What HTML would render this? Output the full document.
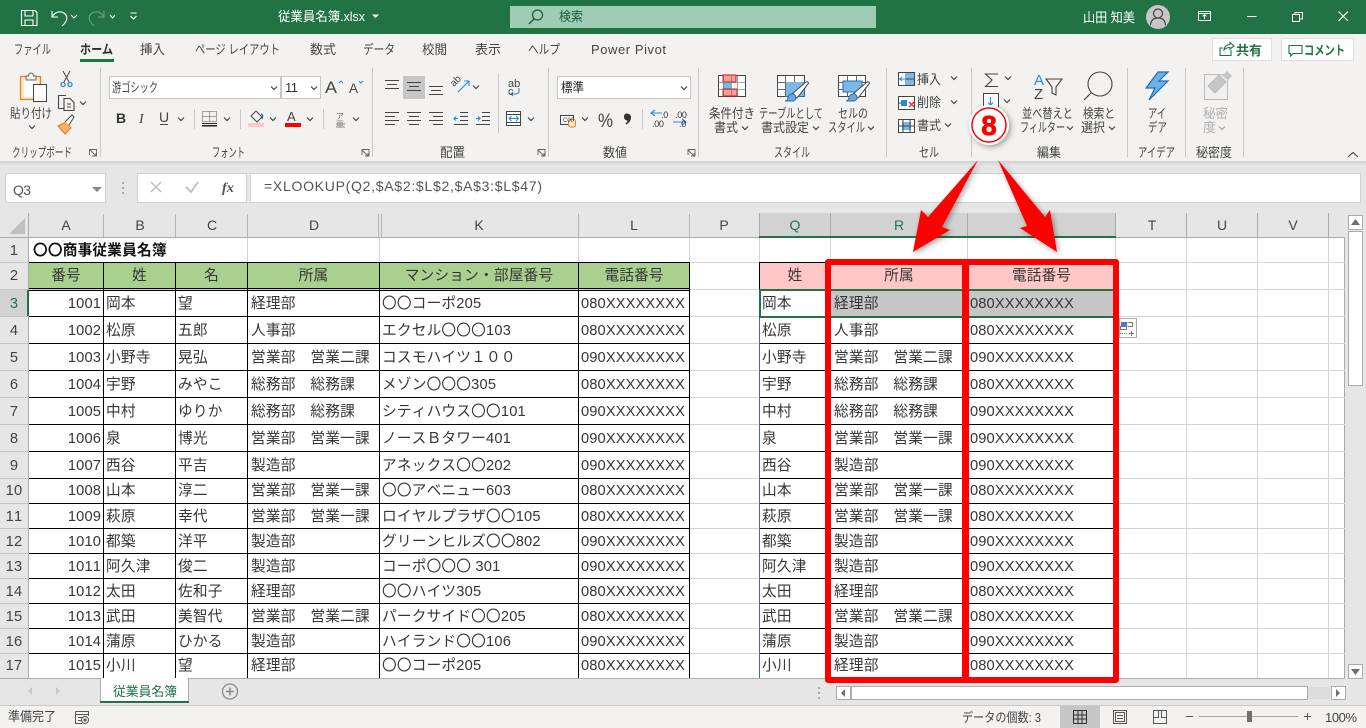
<!DOCTYPE html>
<html lang="ja"><head><meta charset="utf-8"><title>従業員名簿.xlsx</title>
<style>
html,body{margin:0;padding:0;width:1366px;height:728px;overflow:hidden;background:#fff}
body{position:relative;font-family:"Liberation Sans","Noto Sans CJK JP",sans-serif;color:#222}
svg{position:absolute;left:0;top:0}
svg text{font-family:"Liberation Sans","Noto Sans CJK JP",sans-serif}
.r{position:absolute;left:0;width:1366px;font-size:14.67px;white-space:nowrap;color:#363636;font-kerning:none}
.r span{position:absolute;top:0;line-height:inherit;letter-spacing:.2px}
.A{left:29px;width:72px;text-align:right}
.B{left:106px}.C{left:178px}.D{left:251px}.K{left:382px}.L{left:581px}
.Q{left:762px}.R{left:834px}.S{left:970px}
.r .L,.r .S,.r .A{letter-spacing:.12px}
.n{left:0;width:28px;text-align:center;color:#444}
.h span{text-align:center}
.h .A{left:29px;width:74px}.h .B{left:104px;width:71px}.h .C{left:176px;width:71px}.h .D{left:248px;width:131px}.h .K{left:380px;width:198px}.h .L{left:579px;width:110px}
.h .Q{left:760px;width:70px}.h .R{left:831px;width:136px}.h .S{left:968px;width:147px}
.h .n{left:0;width:28px}
</style></head><body>

<svg width="1366" height="728" viewBox="0 0 1366 728">
<defs><path id="c" d="M-3 -1.5L0 1.5L3 -1.5" fill="none" stroke="#444" stroke-width="1.2"/></defs>
<g shape-rendering="crispEdges">
<rect width="1366" height="34" fill="#217346"/>
<rect y="34" width="1366" height="127" fill="#f3f2f1"/>
<rect y="161" width="1366" height="52" fill="#e6e6e6"/>
<rect y="161" width="1366" height="2" fill="#d4d4d4"/>
<rect y="163" width="1366" height="2" fill="#dfdfdf"/>
<rect y="213" width="1345" height="25" fill="#e6e6e6"/>
<rect x="0" y="238" width="28" height="440" fill="#e6e6e6"/>
<rect x="1345" y="213" width="21" height="465" fill="#e6e6e6"/>
<rect y="678" width="1366" height="28" fill="#e6e6e6"/>
<rect y="706" width="1366" height="22" fill="#f3f2f1"/>
<rect y="705" width="1366" height="1" fill="#c8c8c8"/>
<rect x="0" y="678" width="1345" height="1" fill="#ababab"/>
<rect x="1344" y="238" width="1" height="441" fill="#ababab"/>
<rect x="0" y="237" width="1345" height="1" fill="#ababab"/>
<rect x="28" y="213" width="1" height="465" fill="#ababab"/>
<!-- ribbon separators -->
<rect x="100" y="68" width="1" height="89" fill="#c8c8c8"/><rect x="372" y="68" width="1" height="89" fill="#c8c8c8"/><rect x="548" y="68" width="1" height="89" fill="#c8c8c8"/><rect x="698" y="68" width="1" height="89" fill="#c8c8c8"/><rect x="886" y="68" width="1" height="89" fill="#c8c8c8"/><rect x="971" y="68" width="1" height="89" fill="#c8c8c8"/><rect x="1127" y="68" width="1" height="89" fill="#c8c8c8"/><rect x="1185" y="68" width="1" height="89" fill="#c8c8c8"/><rect x="1243" y="68" width="1" height="89" fill="#c8c8c8"/>
<rect x="194" y="109" width="1" height="20" fill="#c8c8c8"/><rect x="240" y="109" width="1" height="20" fill="#c8c8c8"/><rect x="323" y="109" width="1" height="20" fill="#c8c8c8"/><rect x="498" y="74" width="1" height="59" fill="#c8c8c8"/><rect x="642" y="109" width="1" height="20" fill="#c8c8c8"/>
<!-- title -->
<rect x="510" y="6" width="366" height="22" fill="#9fcdb3"/>
<rect x="80" y="59" width="34" height="3" fill="#217346"/>
<!-- buttons -->
<rect x="1212.5" y="38.5" width="59" height="22" fill="#fff" stroke="#e1dfdd"/>
<rect x="1281.5" y="38.5" width="72" height="22" fill="#fff" stroke="#e1dfdd"/>
<!-- combos -->
<rect x="109.5" y="76.5" width="171" height="22" fill="#fff" stroke="#c6c6c6"/>
<rect x="281.5" y="76.5" width="39" height="22" fill="#fff" stroke="#c6c6c6"/>
<rect x="557.5" y="76.5" width="133" height="22" fill="#fff" stroke="#c6c6c6"/>
<rect x="403" y="76" width="22" height="23" fill="#c6c6c6"/>
<!-- formula bar -->
<rect x="5.5" y="173.5" width="100" height="29" fill="#fff" stroke="#d0d0d0"/>
<rect x="137.5" y="173.5" width="109" height="29" fill="#fff" stroke="#d0d0d0"/>
<rect x="250.5" y="173.5" width="1110" height="29" fill="#fff" stroke="#d0d0d0"/>
<rect x="122" y="182" width="2" height="2" fill="#a6a6a6"/><rect x="122" y="187" width="2" height="2" fill="#a6a6a6"/><rect x="122" y="192" width="2" height="2" fill="#a6a6a6"/>

<!-- column header separators -->
<rect x="103" y="214" width="1" height="23" fill="#b4b4b4"/><rect x="175" y="214" width="1" height="23" fill="#b4b4b4"/><rect x="247" y="214" width="1" height="23" fill="#b4b4b4"/><rect x="378" y="214" width="1" height="23" fill="#b4b4b4"/><rect x="381" y="214" width="1" height="23" fill="#b4b4b4"/><rect x="578" y="214" width="1" height="23" fill="#b4b4b4"/><rect x="689" y="214" width="1" height="23" fill="#b4b4b4"/>
<rect x="759" y="213" width="357" height="24" fill="#d2d2d2"/>
<rect x="759" y="213" width="1" height="24" fill="#ababab"/><rect x="830" y="213" width="1" height="24" fill="#ababab"/><rect x="967" y="213" width="1" height="24" fill="#ababab"/><rect x="1115" y="213" width="1" height="24" fill="#ababab"/><rect x="1186" y="213" width="1" height="24" fill="#ababab"/><rect x="1257" y="213" width="1" height="24" fill="#ababab"/><rect x="1328" y="213" width="1" height="24" fill="#ababab"/>
<rect x="759" y="236" width="357" height="2" fill="#217346"/>
<polygon points="9,234 25,218 25,234" fill="#bfbfbf"/>

<!-- light grid -->
<g fill="#d4d4d4">
<rect x="29" y="262" width="1316" height="1"/><rect x="29" y="289" width="1316" height="1"/><rect x="29" y="316" width="1316" height="1"/><rect x="29" y="343" width="1316" height="1"/><rect x="29" y="370" width="1316" height="1"/><rect x="29" y="397" width="1316" height="1"/><rect x="29" y="424" width="1316" height="1"/><rect x="29" y="451" width="1316" height="1"/><rect x="29" y="478" width="1316" height="1"/><rect x="29" y="503" width="1316" height="1"/><rect x="29" y="528" width="1316" height="1"/><rect x="29" y="553" width="1316" height="1"/><rect x="29" y="578" width="1316" height="1"/><rect x="29" y="603" width="1316" height="1"/><rect x="29" y="628" width="1316" height="1"/><rect x="29" y="653" width="1316" height="1"/>
<rect x="247" y="238" width="1" height="440"/><rect x="379" y="238" width="1" height="440"/><rect x="578" y="238" width="1" height="440"/><rect x="689" y="238" width="1" height="440"/><rect x="759" y="238" width="1" height="440"/><rect x="830" y="238" width="1" height="440"/><rect x="967" y="238" width="1" height="440"/><rect x="1115" y="238" width="1" height="440"/><rect x="1186" y="238" width="1" height="440"/><rect x="1257" y="238" width="1" height="440"/><rect x="1328" y="238" width="1" height="440"/>
</g>

<!-- row header lines -->
<g fill="#c4c4c4"><rect y="262" width="28" height="1"/><rect y="289" width="28" height="1"/><rect y="316" width="28" height="1"/><rect y="343" width="28" height="1"/><rect y="370" width="28" height="1"/><rect y="397" width="28" height="1"/><rect y="424" width="28" height="1"/><rect y="451" width="28" height="1"/><rect y="478" width="28" height="1"/><rect y="503" width="28" height="1"/><rect y="528" width="28" height="1"/><rect y="553" width="28" height="1"/><rect y="578" width="28" height="1"/><rect y="603" width="28" height="1"/><rect y="628" width="28" height="1"/><rect y="653" width="28" height="1"/></g>
<rect y="290" width="28" height="26" fill="#d2d2d2"/>

<!-- header fills -->
<rect x="29" y="263" width="660" height="25" fill="#a9d08e"/>
<rect x="760" y="263" width="355" height="26" fill="#ffc7c7"/>
<rect x="831" y="290" width="284" height="26" fill="#c6c6c6"/>

<!-- black table lines left -->
<g fill="#000">
<rect x="29" y="262" width="661" height="1"/><rect x="29" y="288" width="661" height="1"/><rect x="29" y="290" width="661" height="1"/><rect x="29" y="316" width="661" height="1"/><rect x="29" y="343" width="661" height="1"/><rect x="29" y="370" width="661" height="1"/><rect x="29" y="397" width="661" height="1"/><rect x="29" y="424" width="661" height="1"/><rect x="29" y="451" width="661" height="1"/><rect x="29" y="478" width="661" height="1"/><rect x="29" y="503" width="661" height="1"/><rect x="29" y="528" width="661" height="1"/><rect x="29" y="553" width="661" height="1"/><rect x="29" y="578" width="661" height="1"/><rect x="29" y="603" width="661" height="1"/><rect x="29" y="628" width="661" height="1"/><rect x="29" y="653" width="661" height="1"/>
<rect x="103" y="262" width="1" height="416"/><rect x="175" y="262" width="1" height="416"/><rect x="247" y="262" width="1" height="416"/><rect x="379" y="262" width="1" height="416"/><rect x="578" y="262" width="1" height="416"/><rect x="689" y="262" width="1" height="416"/>
<!-- right -->
<rect x="759" y="262" width="357" height="1"/><rect x="760" y="316" width="356" height="1"/><rect x="760" y="343" width="356" height="1"/><rect x="760" y="370" width="356" height="1"/><rect x="760" y="397" width="356" height="1"/><rect x="760" y="424" width="356" height="1"/><rect x="760" y="451" width="356" height="1"/><rect x="760" y="478" width="356" height="1"/><rect x="760" y="503" width="356" height="1"/><rect x="760" y="528" width="356" height="1"/><rect x="760" y="553" width="356" height="1"/><rect x="760" y="578" width="356" height="1"/><rect x="760" y="603" width="356" height="1"/><rect x="760" y="628" width="356" height="1"/><rect x="760" y="653" width="356" height="1"/>
<rect x="759" y="262" width="1" height="28"/><rect x="830" y="262" width="1" height="416"/><rect x="967" y="262" width="1" height="416"/><rect x="1115" y="262" width="1" height="416"/>
</g>
<rect x="759" y="317" width="1" height="361" fill="#3f6fb5"/>
<!-- selection -->
<rect x="27" y="290" width="2" height="26" fill="#217346"/>
<rect x="759" y="289" width="357" height="2" fill="#217346"/>
<rect x="759" y="316" width="357" height="2" fill="#217346"/>
<rect x="759" y="289" width="2" height="29" fill="#217346"/>
<!-- scrollbars -->
<rect x="1348.5" y="215.5" width="14" height="14" fill="#fff" stroke="#ababab"/>
<rect x="1348.5" y="231.5" width="14" height="154" fill="#fff" stroke="#ababab"/>
<rect x="1348.5" y="664.5" width="14" height="14" fill="#fff" stroke="#ababab"/>
<rect x="836.5" y="686.5" width="14" height="13" fill="#fff" stroke="#ababab"/>
<rect x="851.5" y="686.5" width="456" height="13" fill="#fff" stroke="#ababab"/>
<rect x="1308" y="687" width="22" height="12" fill="#dcdcdc"/>
<rect x="1331.5" y="686.5" width="14" height="13" fill="#fff" stroke="#ababab"/>
<rect x="818" y="687" width="2" height="2" fill="#a6a6a6"/><rect x="818" y="692" width="2" height="2" fill="#a6a6a6"/><rect x="818" y="697" width="2" height="2" fill="#a6a6a6"/>
<!-- sheet tab -->
<rect x="100" y="678" width="88" height="24" fill="#fff"/>
<rect x="100" y="678" width="1" height="24" fill="#ababab"/><rect x="188" y="678" width="1" height="24" fill="#ababab"/>
<rect x="100" y="701" width="89" height="2" fill="#217346"/>
<!-- status -->
<rect x="1060" y="706" width="40" height="22" fill="#c6c6c6"/>
<rect x="1199" y="716" width="99" height="1" fill="#a6a6a6"/><rect x="1247" y="711" width="5" height="11" fill="#707070"/>
<rect x="1186" y="716" width="7" height="1" fill="#555"/><rect x="1304" y="716" width="7" height="1" fill="#555"/><rect x="1307" y="713" width="1" height="7" fill="#555"/>
</g>
<polygon points="1355.5,219 1360,225 1351,225" fill="#6e6e6e"/>
<polygon points="1351,669 1360,669 1355.5,675" fill="#6e6e6e"/>
<polygon points="841,693 845,689 845,697" fill="#6e6e6e"/>
<polygon points="1340,693 1336,689 1336,697" fill="#6e6e6e"/>
<polygon points="28,691 32,687 32,695" fill="#c8c8c8"/>
<polygon points="60,691 56,687 56,695" fill="#c8c8c8"/>
<circle cx="230" cy="691.500" r="7.500" fill="none" stroke="#8a8a8a" stroke-width="1.300"/>
<path d="M226 691.500H234M230 687.500V695.500" stroke="#8a8a8a" stroke-width="1.500"/>

<!-- title bar icons -->
<g fill="none" stroke="#fff" stroke-width="1.100">
<path d="M21.500 10.500H35L37 12.500V25.500H21.500Z"/><path d="M25 10.500V16H33V10.500M25 25.500V20H33V25.500"/>
<path d="M52 11V17H58M52.500 16.500C55 12 60 10.500 64 13C68 16 68 21 62 26"/>
<g opacity=".35"><path d="M104 11V17H98M103.500 16.500C101 12 96 10.500 92 13C88 16 88 21 94 26"/></g>
<path d="M71 15L74 18L77 15M110 15L112.500 18L115 15" stroke-width="1"/>
<path d="M130.500 13H136.500M130.500 16L133.500 19L136.500 16" stroke-width="1.100"/>
</g>
<polygon points="372,14.500 379,14.500 375.500,18" fill="#fff"/>
<g fill="none" stroke="#1b5e3a" stroke-width="1.300"><circle cx="537.500" cy="15" r="5"/><path d="M534 19L529 24"/></g>
<circle cx="1158" cy="17" r="12" fill="#c6c6c6"/>
<g fill="none" stroke="#444" stroke-width="1.200"><circle cx="1158" cy="13.500" r="4.500"/><path d="M1150.500 25C1151 19.500 1154 18 1158 18C1162 18 1165 19.500 1165.500 25"/></g>
<g fill="none" stroke="#fff" stroke-width="1.100" shape-rendering="crispEdges">
<rect x="1198.500" y="11.500" width="12" height="9"/><path d="M1198 13.500H1211M1204.500 19V15M1202.500 16.500L1204.500 14.500L1206.500 16.500"/>
<path d="M1247 16.500H1256.500"/>
<rect x="1292.500" y="14.500" width="7" height="7"/><path d="M1295 14V12.500H1302.500V19H1300"/>
</g>
<path d="M1338.500 11.500L1348 21M1348 11.500L1338.500 21" stroke="#fff" stroke-width="1.100"/>

<!-- share / comment icons -->
<g fill="none" stroke="#217346" stroke-width="1.100">
<path d="M1223 48H1220V55.500H1231V50"/><path d="M1224 50C1224.500 46 1227 44.500 1230 44.500V42.500L1234 46L1230 49V47.500C1227.500 47.500 1225.500 48.500 1224 50Z"/>
<path d="M1289 45.500H1302V53.500H1293L1290.500 56V53.500H1289Z"/>
</g>

<!-- clipboard group -->
<rect x="20.500" y="76.500" width="20" height="23" fill="#fbe6d2" stroke="#e8820e" stroke-width="1.300"/>
<rect x="24" y="79" width="13" height="18" fill="#fff"/>
<path d="M26 80V76H28.500C29 72 33 72 33.500 76H36V80Z" fill="#f3f2f1" stroke="#666"/>
<rect x="33.500" y="84.500" width="13" height="17" fill="#fff" stroke="#444"/>
<use href="#c" x="32" y="127"/>
<g fill="none" stroke="#444" stroke-width="1"><path d="M63 71L69 82M70 71L64 82"/></g>
<g fill="none" stroke="#2b88d8" stroke-width="1.300"><circle cx="63" cy="84.500" r="2"/><circle cx="70" cy="84.500" r="2"/></g>
<g fill="none" stroke="#444" stroke-width="1.100"><path d="M64 108.500H58.500V95.500H66"/><path d="M64 98.500H70L74 102.500V110.500H64Z" fill="#f3f2f1"/><path d="M67 104H71M67 107H71"/></g>
<use href="#c" x="83" y="103"/>
<path d="M58 126L66 122L71 128L65 134Z" fill="#f6b26b" stroke="#e07b00"/>
<path d="M65 122L72 115L74 117L69 125" fill="#fff" stroke="#444"/>

<!-- font group -->
<use href="#c" x="274" y="88"/><use href="#c" x="314" y="88"/>
<path d="M339 83L341 81L343 83" fill="none" stroke="#2b88d8"/><path d="M359 81L361 83L363 81" fill="none" stroke="#2b88d8"/>
<use href="#c" x="181" y="119"/><use href="#c" x="227" y="119"/><use href="#c" x="273" y="119"/><use href="#c" x="310" y="119"/><use href="#c" x="356" y="119"/>
<path d="M160 124.500H168" stroke="#444" shape-rendering="crispEdges"/>
<g shape-rendering="crispEdges"><path d="M202.500 111.500H216.500V121.500H202.500ZM202.500 116.500H216.500M209.500 111.500V121.500" fill="none" stroke="#555" stroke-dasharray="1 1"/><rect x="202" y="123" width="15" height="1" fill="#222"/><rect x="202" y="125" width="15" height="1.500" fill="#222"/>
<rect x="248" y="123" width="16" height="4" fill="#ffc7c7"/><rect x="285" y="123" width="16" height="4" fill="#f00"/></g>
<path d="M251 116L256 111L262 117L257 122Z" fill="none" stroke="#444"/><path d="M261 114C263 114 263 117 262 119" fill="none" stroke="#2b6cb0" stroke-width="1.300"/>
<path d="M336 124H345M336 127H345" stroke="#888" shape-rendering="crispEdges"/>

<!-- alignment -->
<g stroke="#444" fill="none" shape-rendering="crispEdges">
<path d="M385 80.500H399M387 84.500H397M385 88.500H399"/>
<path d="M407 82.500H421M409 86.500H419M407 90.500H421"/>
<path d="M429 86.500H443M431 90.500H441M429 94.500H443"/>
<path d="M385 112.500H399M385 116.500H395M385 120.500H399M385 124.500H395"/>
<path d="M407 112.500H421M409 116.500H419M407 120.500H421M409 124.500H419"/>
<path d="M429 112.500H443M433 116.500H443M429 120.500H443M433 124.500H443"/>
<path d="M460 112.500H468M460 116.500H468M460 120.500H468M454 124.500H468"/>
<path d="M482 112.500H490M482 116.500H490M482 120.500H490M476 124.500H490"/>
</g>
<g fill="none" stroke="#2b88d8" stroke-width="1.100">
<path d="M458 118.500H454M456 116.500L454 118.500L456 120.500"/><path d="M476 118.500H480M478 116.500L480 118.500L478 120.500"/>
<path d="M458 92L469 81M464 81H469V86"/>
<path d="M519 88V91C519 93 517 94 515 94H511M513 92L511 94L513 96"/>
</g>
<g fill="#444" font-size="9"><text x="453" y="85" font-size="10" transform="rotate(-45 456 85)">ab</text></g>
<text x="508" y="87" font-size="11" fill="#444">ab</text><text x="508" y="95" font-size="11" fill="#444">c</text>
<use href="#c" x="476" y="87"/><use href="#c" x="531" y="119"/>
<rect x="506.500" y="111.500" width="14" height="14" fill="#fff" stroke="#444" shape-rendering="crispEdges"/>
<path d="M507 114.500H520M507 122.500H520" stroke="#444" shape-rendering="crispEdges"/>
<path d="M509.500 118.500H518M511.500 116L509 118.500L511.500 121M516 116L518.500 118.500L516 121" fill="none" stroke="#2b88d8"/>

<!-- number -->
<use href="#c" x="684" y="88"/><use href="#c" x="585" y="119"/>
<rect x="560.500" y="115.500" width="13" height="9" fill="#fff" stroke="#444" shape-rendering="crispEdges"/>
<rect x="568.500" y="119.500" width="7" height="7.500" rx="2" fill="#fbe6d2" stroke="#e8820e"/>
<path d="M662 113H652M655 110L651 113L655 116M673 122H685M682 119L686 122L682 125" fill="none" stroke="#2b88d8" stroke-width="1.100"/>
<path d="M626.500 113.500C629.500 113.500 631 115 631 117.500C631 121 628.500 123.500 626 124.500L625.500 123.500C627 122.500 627.500 121.500 627.500 120.500C625.500 120.500 624 119 624 117C624 115 625 113.500 626.500 113.500Z" fill="#333"/>

<!-- styles icons -->
<g shape-rendering="crispEdges">
<rect x="718.500" y="75.500" width="27" height="21" fill="#fff" stroke="#444"/>
<rect x="723" y="75" width="13" height="7" fill="#ff9c9c" stroke="#d11"/><rect x="723" y="82" width="8" height="7" fill="#7cb7e8"/><rect x="723" y="89" width="14" height="7" fill="#ff9c9c" stroke="#d11"/>
<path d="M718 82.500H746M718 89.500H746M723.500 75V97M731.500 75V97M737.500 75V97" stroke="#666" fill="none" opacity=".6"/>
<rect x="777.500" y="75.500" width="27" height="21" fill="#fff" stroke="#444"/>
<path d="M777 82.500H805M777 89.500H805M785.500 75V97M794.500 75V97" stroke="#666" fill="none"/>
<rect x="786" y="82" width="18" height="14" fill="#7cb7e8"/><path d="M786 96.500H805M804.500 82V97" stroke="#1e6fb8" fill="none"/>
<rect x="838.500" y="75.500" width="27" height="21" fill="#fff" stroke="#444"/>
<path d="M838 82.500H866M838 89.500H866M847.500 75V97M856.500 75V97" stroke="#666" fill="none"/>
<rect x="843" y="81" width="19" height="11" fill="#7cb7e8" stroke="#1e6fb8"/>
</g>
<g>
<path d="M792 94L806 82C808 81 809 83 808 84L797 98Z" fill="#fff" stroke="#444"/><path d="M785 101C787 101 788 99 788 97C789 94 793 93 795 95C797 97 796 100 793 101Z" fill="#6ea6d8" stroke="#1e6fb8"/>
<path d="M853 94L867 82C869 81 870 83 869 84L858 98Z" fill="#fff" stroke="#444"/><path d="M846 101C848 101 849 99 849 97C850 94 854 93 856 95C858 97 857 100 854 101Z" fill="#6ea6d8" stroke="#1e6fb8"/>
</g>
<use href="#c" x="745" y="128"/><use href="#c" x="816" y="128"/><use href="#c" x="871" y="128"/>

<!-- cells icons -->
<g shape-rendering="crispEdges">
<rect x="898.500" y="72.500" width="16" height="13" fill="#fff" stroke="#444"/><rect x="905" y="73" width="9" height="12" fill="#7cb7e8"/>
<rect x="898.500" y="96.500" width="16" height="13" fill="#fff" stroke="#444"/><rect x="901" y="100" width="6" height="6" fill="#2b88d8"/>
<rect x="898.500" y="119.500" width="16" height="13" fill="#fff" stroke="#444"/><rect x="902" y="122" width="9" height="8" fill="#7cb7e8"/>
<path d="M898 79H915M898 103H901M912 103H915M898 126H915M903 120V133M910 120V133" stroke="#444" fill="none"/>
</g>
<path d="M909 102L914 107M914 102L909 107" stroke="#e03030" stroke-width="1.300"/>
<path d="M906 79H900M902 77L900 79L902 81" stroke="#2b88d8" fill="none"/>
<use href="#c" x="954" y="78"/><use href="#c" x="954" y="102"/><use href="#c" x="948" y="125"/>

<!-- editing icons -->
<path d="M998 74H985.500L992 80L985.500 86.500H998" fill="none" stroke="#444" stroke-width="1.100"/>
<use href="#c" x="1008" y="78"/><use href="#c" x="1007" y="101"/>
<rect x="983.500" y="93.500" width="15" height="14" fill="#fff" stroke="#444" shape-rendering="crispEdges"/>
<path d="M990.500 97V105M988 102.500L990.500 105L993 102.500" stroke="#2b88d8" fill="none"/>
<text x="1034" y="85" font-size="15" fill="#2b88d8">A</text><text x="1034" y="99" font-size="15" fill="#444">Z</text>
<path d="M1046 79H1062L1056 87V95L1052 93V87Z" fill="none" stroke="#444" stroke-width="1.100"/>
<use href="#c" x="1070" y="128"/><use href="#c" x="1112" y="128"/>
<circle cx="1100" cy="84" r="12" fill="none" stroke="#444" stroke-width="1.100"/><path d="M1091 93L1084 100" stroke="#444" stroke-width="1.200"/>
<path d="M1158 72L1146 88H1155L1149 100L1168 81H1159L1168 72Z" fill="#6cb0e8" stroke="#1e6fb8" stroke-width="1.200"/>
<g fill="none" stroke="#bcbcbc"><rect x="1204.500" y="74.500" width="23" height="25" fill="#f0f0f0"/></g>
<path d="M1208 86L1219 75L1226 82L1215 93Z" fill="#c6c6c6" stroke="#bcbcbc"/><path d="M1222 76L1227 71L1232 76L1228 80Z" fill="#c6c6c6"/>
<use href="#c" x="1222" y="128" opacity=".45"/>
<path d="M1348 157L1353 152.500L1358 157" fill="none" stroke="#444" stroke-width="1.100"/>
<!-- launchers -->
<g fill="none" stroke="#666" stroke-width=".9"><path d="M90 150L96 156M96 153V156H93M89.500 155V149.500H96.500V156H92"/><path d="M362 150L368 156M368 153V156H365M362 155V149.500H369V156H365"/><path d="M538 150L544 156M544 153V156H541M538 155V149.500H545V156H541"/><path d="M688 150L694 156M694 153V156H691M688 155V149.500H695V156H691"/></g>
<!-- formula bar icons -->
<polygon points="92,187 102,187 97,192" fill="#888"/>
<path d="M151 182L161 192M161 182L151 192" stroke="#bdbdbd" stroke-width="1.500"/>
<path d="M186 187L191 192L198 182" fill="none" stroke="#bdbdbd" stroke-width="1.700"/>
<!-- quick analysis -->
<rect x="1119.500" y="318.500" width="17" height="19" fill="#fff" stroke="#ababab" shape-rendering="crispEdges"/>
<g shape-rendering="crispEdges"><rect x="1121" y="322" width="6" height="4" fill="#3f78e0"/><path d="M1127.500 322.500H1132.500V326.500H1127.500M1120.500 326.500H1126.500V329.500H1120.500Z" fill="none" stroke="#777"/><path d="M1120 333.500H1127" stroke="#777" stroke-dasharray="1 1"/><path d="M1129 333.500H1134M1131.500 331V336" stroke="#777"/></g>
<!-- status icons -->
<g fill="none" stroke="#555" stroke-width="1" shape-rendering="crispEdges">
<path d="M75.500 711.500H88.500V716M75.500 711.500V723.500H82M75.500 714.500H88.500M78 717.500H83M78 720.500H82"/>
<rect x="1073.500" y="710.500" width="13" height="13" stroke="#333"/><path d="M1078 710V724M1082 710V724M1073 715H1087M1073 719H1087" stroke="#333"/>
<rect x="1113.500" y="710.500" width="13" height="13"/><rect x="1115.500" y="712.500" width="9" height="9"/><path d="M1117 715.500H1123M1117 718.500H1123"/>
<rect x="1153.500" y="710.500" width="13" height="13"/><path d="M1153 717.500H1158.500V711M1161.500 711V717.500H1167"/>
</g>
<circle cx="85" cy="720" r="3.500" fill="none" stroke="#555"/><circle cx="85" cy="720" r="1.500" fill="#555"/>

<!-- ribbon & title text (real text) -->
<g font-size="13" fill="#444">
<text x="278" y="21" fill="#fff" textLength="87" lengthAdjust="spacingAndGlyphs">従業員名簿.xlsx</text>
<text x="559" y="21" fill="#1b5e3a" textLength="24" lengthAdjust="spacingAndGlyphs">検索</text>
<text x="1083" y="22" fill="#fff" textLength="52" lengthAdjust="spacingAndGlyphs">山田 知美</text>
<text x="14" y="54" textLength="37" lengthAdjust="spacingAndGlyphs">ファイル</text>
<text x="80" y="54" font-weight="700" fill="#2e2e2e" textLength="33" lengthAdjust="spacingAndGlyphs">ホーム</text>
<text x="140" y="54" textLength="25" lengthAdjust="spacingAndGlyphs">挿入</text>
<text x="195" y="54" textLength="85" lengthAdjust="spacingAndGlyphs">ページ レイアウト</text>
<text x="310" y="54" textLength="26" lengthAdjust="spacingAndGlyphs">数式</text>
<text x="363" y="54" textLength="32" lengthAdjust="spacingAndGlyphs">データ</text>
<text x="422" y="54" textLength="25" lengthAdjust="spacingAndGlyphs">校閲</text>
<text x="475" y="54" textLength="26" lengthAdjust="spacingAndGlyphs">表示</text>
<text x="528" y="54" textLength="32" lengthAdjust="spacingAndGlyphs">ヘルプ</text>
<text x="591" y="54" textLength="75" lengthAdjust="spacing">Power Pivot</text>
<text x="1236" y="55" font-weight="700" fill="#217346" textLength="26" lengthAdjust="spacingAndGlyphs">共有</text>
<text x="1304" y="55" font-weight="700" fill="#217346" textLength="41" lengthAdjust="spacingAndGlyphs">コメント</text>
<text x="10" y="118" textLength="42" lengthAdjust="spacingAndGlyphs">貼り付け</text>
<text x="112" y="92" textLength="46" lengthAdjust="spacingAndGlyphs">游ゴシック</text>
<text x="285" y="92" fill="#333" textLength="13">11</text>
<text x="325" y="93" font-size="17" textLength="12" lengthAdjust="spacingAndGlyphs">A</text>
<text x="349" y="93" font-size="14" textLength="9" lengthAdjust="spacingAndGlyphs">A</text>
<text x="116" y="123" font-size="14" font-weight="700" fill="#333">B</text>
<text x="139" y="123" font-size="14" font-style="italic" style="font-family:'Liberation Serif',serif">I</text>
<text x="159" y="122" font-size="14">U</text>
<text x="287" y="121" textLength="11">A</text>
<text x="336" y="119" font-size="8" fill="#666">ア</text>
<text x="336" y="127" font-size="8" fill="#888">亜</text>
<text x="561" y="92" textLength="23" lengthAdjust="spacingAndGlyphs" fill="#222">標準</text>
<text x="598" y="127" font-size="19" textLength="15" lengthAdjust="spacingAndGlyphs">%</text>
<text x="661" y="118" font-size="9" fill="#333" letter-spacing="-.3">.0</text>
<text x="652" y="127" font-size="9" fill="#333" letter-spacing="-.3">.00</text>
<text x="675" y="118" font-size="9" fill="#333" letter-spacing="-.3">.00</text>
<text x="679" y="127" font-size="9" fill="#333" letter-spacing="-.3">.0</text>
<text x="563" y="122" font-size="6" fill="#333">C00</text>
<text x="709" y="118" textLength="46" lengthAdjust="spacingAndGlyphs">条件付き</text>
<text x="714" y="132" textLength="24" lengthAdjust="spacingAndGlyphs">書式</text>
<text x="759" y="118" textLength="64" lengthAdjust="spacingAndGlyphs">テーブルとして</text>
<text x="761" y="132" textLength="48" lengthAdjust="spacingAndGlyphs">書式設定</text>
<text x="838" y="118" textLength="30" lengthAdjust="spacingAndGlyphs">セルの</text>
<text x="828" y="132" textLength="37" lengthAdjust="spacingAndGlyphs">スタイル</text>
<text x="917" y="84" textLength="24" lengthAdjust="spacingAndGlyphs">挿入</text>
<text x="917" y="107" textLength="24" lengthAdjust="spacingAndGlyphs">削除</text>
<text x="917" y="130" textLength="24" lengthAdjust="spacingAndGlyphs">書式</text>
<text x="1022" y="118" textLength="51" lengthAdjust="spacingAndGlyphs">並べ替えと</text>
<text x="1020" y="132" textLength="45" lengthAdjust="spacingAndGlyphs">フィルター</text>
<text x="1083" y="118" textLength="32" lengthAdjust="spacingAndGlyphs">検索と</text>
<text x="1081" y="132" textLength="24" lengthAdjust="spacingAndGlyphs">選択</text>
<text x="1148" y="118" textLength="18" lengthAdjust="spacingAndGlyphs">アイ</text>
<text x="1148" y="132" textLength="19" lengthAdjust="spacingAndGlyphs">デア</text>
<text x="1203" y="118" fill="#b0b0b0" textLength="25" lengthAdjust="spacingAndGlyphs">秘密</text>
<text x="1203" y="132" fill="#b0b0b0">度</text>
<text x="12" y="157" textLength="60" lengthAdjust="spacingAndGlyphs">クリップボード</text>
<text x="212" y="157" textLength="33" lengthAdjust="spacingAndGlyphs">フォント</text>
<text x="440" y="157" textLength="25" lengthAdjust="spacingAndGlyphs">配置</text>
<text x="603" y="157" textLength="24" lengthAdjust="spacingAndGlyphs">数値</text>
<text x="774" y="157" textLength="36" lengthAdjust="spacingAndGlyphs">スタイル</text>
<text x="919" y="157" textLength="20" lengthAdjust="spacingAndGlyphs">セル</text>
<text x="1037" y="157" textLength="24" lengthAdjust="spacingAndGlyphs">編集</text>
<text x="1138" y="157" textLength="37" lengthAdjust="spacingAndGlyphs">アイデア</text>
<text x="1196" y="157" textLength="36" lengthAdjust="spacingAndGlyphs">秘密度</text>
<text x="13" y="195" font-size="14" fill="#555" textLength="18">Q3</text>
<text x="222" y="192" font-size="14" font-weight="700" font-style="italic" fill="#555" style="font-family:'Liberation Serif',serif" textLength="12" lengthAdjust="spacingAndGlyphs">fx</text>
<text x="264" y="191" font-size="14" fill="#555" textLength="278" lengthAdjust="spacing">=XLOOKUP(Q2,$A$2:$L$2,$A$3:$L$47)</text>
<text x="8" y="721" fill="#444" textLength="48" lengthAdjust="spacingAndGlyphs">準備完了</text>
<text x="962" y="722" fill="#444" textLength="79" lengthAdjust="spacingAndGlyphs">データの個数: 3</text>
<text x="1325" y="722" fill="#444" textLength="32">100%</text>
<text x="113" y="696" fill="#217346" textLength="64" lengthAdjust="spacingAndGlyphs">従業員名簿</text>
</g>
<g font-size="14" fill="#444" text-anchor="middle">
<text x="66" y="230">A</text><text x="140" y="230">B</text><text x="212" y="230">C</text><text x="314" y="230">D</text><text x="479" y="230">K</text><text x="634" y="230">L</text><text x="724" y="230">P</text><text x="795" y="230" fill="#217346">Q</text><text x="899" y="230" fill="#217346">R</text><text x="1152" y="230">T</text><text x="1222" y="230">U</text><text x="1293" y="230">V</text>
</g>
</svg>

<!-- sheet text -->
<div class="r" style="top:239px;height:24px;line-height:24px"><span class="n">1</span><span style="left:33px;font-weight:700;color:#111">〇〇商事従業員名簿</span></div>
<div class="r h" style="top:263px;height:26px;line-height:26px"><span class="n">2</span><span class="A">番号</span><span class="B">姓</span><span class="C">名</span><span class="D">所属</span><span class="K">マンション・部屋番号</span><span class="L">電話番号</span><span class="Q">姓</span><span class="R">所属</span><span class="S">電話番号</span></div>
<div class="r" style="top:291px;height:26px;line-height:26px"><span class="n" style="color:#217346">3</span><span class="A">1001</span><span class="B">岡本</span><span class="C">望</span><span class="D">経理部</span><span class="K">〇〇コーポ205</span><span class="L">080XXXXXXXX</span><span class="Q">岡本</span><span class="R">経理部</span><span class="S">080XXXXXXXX</span></div>
<div class="r" style="top:318px;height:26px;line-height:26px"><span class="n">4</span><span class="A">1002</span><span class="B">松原</span><span class="C">五郎</span><span class="D">人事部</span><span class="K">エクセル〇〇〇103</span><span class="L">080XXXXXXXX</span><span class="Q">松原</span><span class="R">人事部</span><span class="S">080XXXXXXXX</span></div>
<div class="r" style="top:345px;height:26px;line-height:26px"><span class="n">5</span><span class="A">1003</span><span class="B">小野寺</span><span class="C">晃弘</span><span class="D">営業部　営業二課</span><span class="K">コスモハイツ１００</span><span class="L">090XXXXXXXX</span><span class="Q">小野寺</span><span class="R">営業部　営業二課</span><span class="S">090XXXXXXXX</span></div>
<div class="r" style="top:372px;height:26px;line-height:26px"><span class="n">6</span><span class="A">1004</span><span class="B">宇野</span><span class="C">みやこ</span><span class="D">総務部　総務課</span><span class="K">メゾン〇〇〇305</span><span class="L">080XXXXXXXX</span><span class="Q">宇野</span><span class="R">総務部　総務課</span><span class="S">080XXXXXXXX</span></div>
<div class="r" style="top:399px;height:26px;line-height:26px"><span class="n">7</span><span class="A">1005</span><span class="B">中村</span><span class="C">ゆりか</span><span class="D">総務部　総務課</span><span class="K">シティハウス〇〇101</span><span class="L">090XXXXXXXX</span><span class="Q">中村</span><span class="R">総務部　総務課</span><span class="S">090XXXXXXXX</span></div>
<div class="r" style="top:426px;height:26px;line-height:26px"><span class="n">8</span><span class="A">1006</span><span class="B">泉</span><span class="C">博光</span><span class="D">営業部　営業一課</span><span class="K">ノースＢタワー401</span><span class="L">090XXXXXXXX</span><span class="Q">泉</span><span class="R">営業部　営業一課</span><span class="S">090XXXXXXXX</span></div>
<div class="r" style="top:453px;height:26px;line-height:26px"><span class="n">9</span><span class="A">1007</span><span class="B">西谷</span><span class="C">平吉</span><span class="D">製造部</span><span class="K">アネックス〇〇202</span><span class="L">090XXXXXXXX</span><span class="Q">西谷</span><span class="R">製造部</span><span class="S">090XXXXXXXX</span></div>
<div class="r" style="top:479px;height:24px;line-height:24px"><span class="n">10</span><span class="A">1008</span><span class="B">山本</span><span class="C">淳二</span><span class="D">営業部　営業一課</span><span class="K">〇〇アベニュー603</span><span class="L">080XXXXXXXX</span><span class="Q">山本</span><span class="R">営業部　営業一課</span><span class="S">080XXXXXXXX</span></div>
<div class="r" style="top:505px;height:24px;line-height:24px"><span class="n">11</span><span class="A">1009</span><span class="B">萩原</span><span class="C">幸代</span><span class="D">営業部　営業一課</span><span class="K">ロイヤルプラザ〇〇105</span><span class="L">080XXXXXXXX</span><span class="Q">萩原</span><span class="R">営業部　営業一課</span><span class="S">080XXXXXXXX</span></div>
<div class="r" style="top:530px;height:24px;line-height:24px"><span class="n">12</span><span class="A">1010</span><span class="B">都築</span><span class="C">洋平</span><span class="D">製造部</span><span class="K">グリーンヒルズ〇〇802</span><span class="L">090XXXXXXXX</span><span class="Q">都築</span><span class="R">製造部</span><span class="S">090XXXXXXXX</span></div>
<div class="r" style="top:555px;height:24px;line-height:24px"><span class="n">13</span><span class="A">1011</span><span class="B">阿久津</span><span class="C">俊二</span><span class="D">製造部</span><span class="K">コーポ〇〇〇 301</span><span class="L">090XXXXXXXX</span><span class="Q">阿久津</span><span class="R">製造部</span><span class="S">090XXXXXXXX</span></div>
<div class="r" style="top:580px;height:24px;line-height:24px"><span class="n">14</span><span class="A">1012</span><span class="B">太田</span><span class="C">佐和子</span><span class="D">経理部</span><span class="K">〇〇ハイツ305</span><span class="L">080XXXXXXXX</span><span class="Q">太田</span><span class="R">経理部</span><span class="S">080XXXXXXXX</span></div>
<div class="r" style="top:605px;height:24px;line-height:24px"><span class="n">15</span><span class="A">1013</span><span class="B">武田</span><span class="C">美智代</span><span class="D">営業部　営業二課</span><span class="K">パークサイド〇〇205</span><span class="L">080XXXXXXXX</span><span class="Q">武田</span><span class="R">営業部　営業二課</span><span class="S">080XXXXXXXX</span></div>
<div class="r" style="top:630px;height:24px;line-height:24px"><span class="n">16</span><span class="A">1014</span><span class="B">蒲原</span><span class="C">ひかる</span><span class="D">製造部</span><span class="K">ハイランド〇〇106</span><span class="L">090XXXXXXXX</span><span class="Q">蒲原</span><span class="R">製造部</span><span class="S">090XXXXXXXX</span></div>
<div class="r" style="top:654px;height:24px;line-height:24px"><span class="n">17</span><span class="A">1015</span><span class="B">小川</span><span class="C">望</span><span class="D">経理部</span><span class="K">〇〇コーポ205</span><span class="L">080XXXXXXXX</span><span class="Q">小川</span><span class="R">経理部</span><span class="S">080XXXXXXXX</span></div>

<!-- annotation overlay -->
<svg width="1366" height="728" viewBox="0 0 1366 728">
<defs>
<filter id="sh" x="-30%" y="-30%" width="160%" height="160%"><feGaussianBlur in="SourceAlpha" stdDeviation="3"/><feOffset dx="2" dy="2"/><feComponentTransfer><feFuncA type="linear" slope=".35"/></feComponentTransfer><feMerge><feMergeNode/><feMergeNode in="SourceGraphic"/></feMerge></filter>
</defs>
<g fill="#f00" filter="url(#sh)">
<polygon points="978,160 928,217 921,210 913,252 950,230 942,227"/>
<polygon points="998,160 1045,217 1050,210 1057,252 1020,228 1027,226"/>
</g>
<path d="M828 262H1116V680H828Z" fill="none" stroke="#f00" stroke-width="6" stroke-linejoin="round"/>
<rect x="962" y="260" width="7" height="423" fill="#f00"/>
<circle cx="989" cy="125" r="20" fill="#fff" filter="url(#sh)"/>
<circle cx="989" cy="125" r="17" fill="#fff" stroke="#f00" stroke-width="1.500"/>
<text x="989" y="135" font-size="28" font-weight="700" fill="#f00" text-anchor="middle" stroke="#f00" stroke-width=".8">8</text>
</svg>
</body></html>
